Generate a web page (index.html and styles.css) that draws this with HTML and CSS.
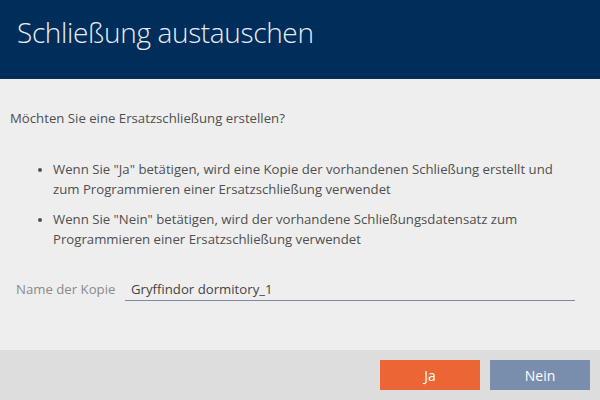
FILE: index.html
```html
<!DOCTYPE html>
<html lang="de">
<head>
<meta charset="utf-8">
<link rel="stylesheet" href="styles.css">
</head>
<body>
<div class="dialog">
  <header class="head">
    <h1 class="title">Schließung austauschen</h1>
  </header>
  <main class="content">
    <p class="question">Möchten Sie eine Ersatzschließung erstellen?</p>
    <ul class="list">
      <li>Wenn Sie "Ja" betätigen, wird eine Kopie der vorhandenen Schließung erstellt und zum Programmieren einer Ersatzschließung verwendet</li>
      <li>Wenn Sie "Nein" betätigen, wird der vorhandene Schließungsdatensatz zum Programmieren einer Ersatzschließung verwendet</li>
    </ul>
    <div class="field">
      <span class="label">Name der Kopie</span>
      <div class="input">Gryffindor dormitory_1</div>
    </div>
  </main>
  <footer class="foot">
    <button class="btn btn-yes">Ja</button>
    <button class="btn btn-no">Nein</button>
  </footer>
</div>
</body>
</html>
```

FILE: styles.css
```css
* { box-sizing: border-box; }
html, body { margin: 0; padding: 0; }
body {
  width: 600px;
  height: 400px;
  font-family: "Open Sans", "Noto Sans", sans-serif;
  background: #eeeeee;
  overflow: hidden;
}
.dialog {
  display: flex;
  flex-direction: column;
  height: 400px;
}
.head {
  height: 79px;
  background: #002d59;
  padding: 14px 0 0 17px;
}
.title {
  margin: 0;
  font-weight: 300;
  font-size: 28px;
  line-height: 36px;
  color: #e8eef5;
  letter-spacing: -0.35px;
}
.content {
  flex: 1;
  padding: 0 25px 0 10px;
  color: #4f4f4f;
  font-size: 13.2px;
}
.question {
  margin: 29px 0 0 0;
  line-height: 20px;
}
.list {
  margin: 31px 0 0 0;
  padding: 0 0 0 43px;
  line-height: 20px;
}
.list li {
  margin-bottom: 10px;
  padding-left: 0;
}
.list li::marker { font-size: 11px; }
.field {
  display: flex;
  align-items: flex-end;
  margin-top: 30px;
  padding-left: 6px;
}
.label {
  width: 109px;
  color: #8a8a8a;
  line-height: 20px;
  padding-bottom: 2px;
}
.input {
  flex: 1;
  border-bottom: 1px solid #7a8ca5;
  padding: 0 0 1px 6px;
  line-height: 20px;
  color: #444;
}
.foot {
  height: 50px;
  background: #dddddd;
  display: flex;
  justify-content: flex-end;
  align-items: center;
  gap: 10px;
  padding-right: 10px;
}
.btn {
  width: 100px;
  height: 30px;
  border: none;
  font-family: inherit;
  font-size: 14px;
  color: #fff;
}
.btn-yes { background: #ec6535; }
.btn-no { background: #788eac; }
```
